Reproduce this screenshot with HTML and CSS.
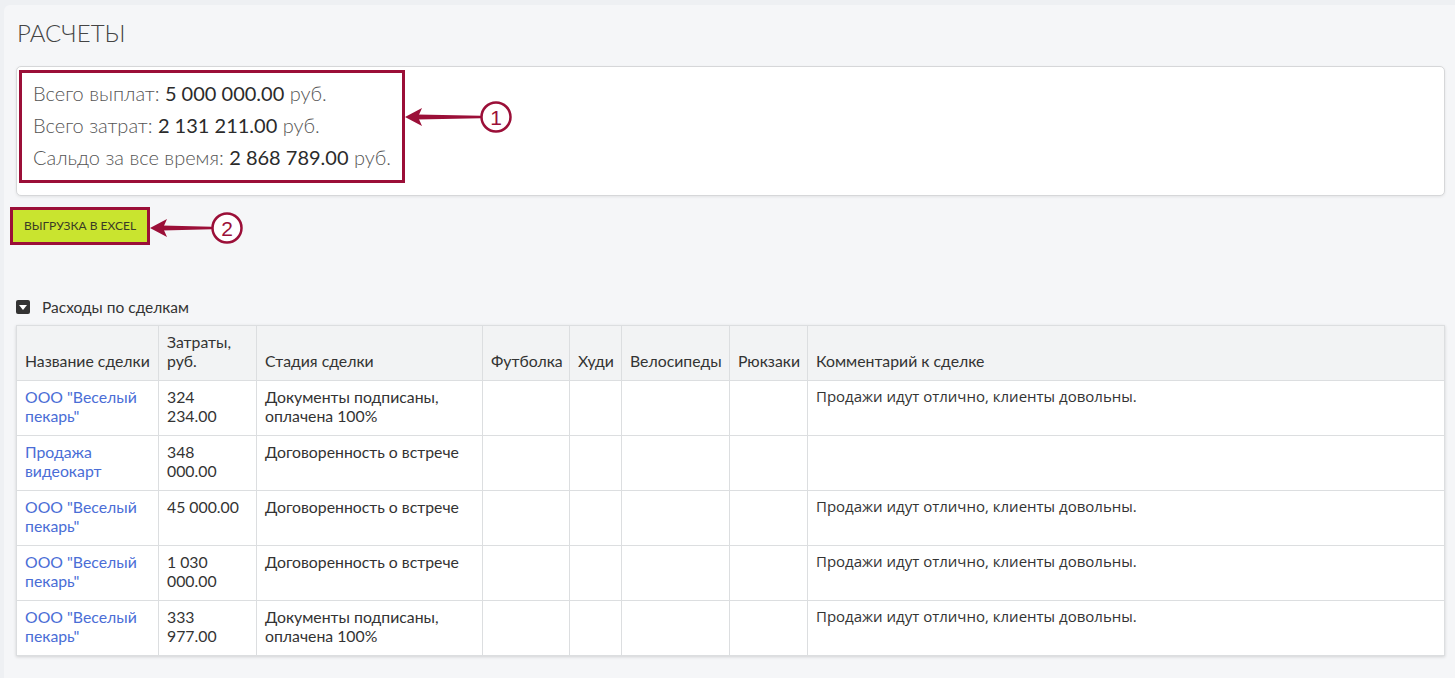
FILE: index.html
```html
<!DOCTYPE html>
<html lang="ru">
<head>
    <meta charset="UTF-8">
    <meta name="viewport" content="width=device-width, initial-scale=1.0">
    <title>Расчеты</title>
    <link rel="stylesheet" href="styles.css">
</head>
<body>
    <div class="page">
        <h1 class="page-title">РАСЧЕТЫ</h1>

        <div class="summary-card">
            <div class="summary-box mark">
                <div class="summary-line">Всего выплат: <b>5 000 000.00</b> руб.</div>
                <div class="summary-line">Всего затрат: <b>2 131 211.00</b> руб.</div>
                <div class="summary-line">Сальдо за все время: <b>2 868 789.00</b> руб.</div>
                <!-- выноска 1 -->
                <svg class="callout" width="116" height="36" viewBox="0 0 116 36">
                    <polygon points="3,18 20,9 16,18 20,27" fill="#9b0f38"/>
                    <polygon points="15,15.5 79,16.8 79,19.2 15,20.5" fill="#9b0f38"/>
                    <circle cx="94" cy="18" r="14.5" fill="#fff" stroke="#9b0f38" stroke-width="2.5"/>
                    <text x="94" y="25.5" text-anchor="middle" class="callout-num">1</text>
                </svg>
            </div>
        </div>

        <button class="excel-button mark">Выгрузка в Excel
            <!-- выноска 2 -->
            <svg class="callout" width="100" height="36" viewBox="0 0 100 36">
                <polygon points="3,18 20,9 16,18 20,27" fill="#9b0f38"/>
                <polygon points="15,15.5 65,16.8 65,19.2 15,20.5" fill="#9b0f38"/>
                <circle cx="80" cy="18" r="14.5" fill="#fff" stroke="#9b0f38" stroke-width="2.5"/>
                <text x="80" y="25.5" text-anchor="middle" class="callout-num">2</text>
            </svg>
        </button>

        <div class="section-toggle">
            <span class="toggle-icon"></span>
            <span>Расходы по сделкам</span>
        </div>

        <table class="deals">
            <colgroup>
                <col class="c-name">
                <col class="c-cost">
                <col class="c-stage">
                <col class="c-shirt">
                <col class="c-hoodie">
                <col class="c-bike">
                <col class="c-bag">
                <col>
            </colgroup>
            <thead>
                <tr>
                    <th>Название сделки</th>
                    <th>Затраты, руб.</th>
                    <th>Стадия сделки</th>
                    <th>Футболка</th>
                    <th>Худи</th>
                    <th>Велосипеды</th>
                    <th>Рюкзаки</th>
                    <th>Комментарий к сделке</th>
                </tr>
            </thead>
            <tbody>
                <tr>
                    <td><a href="#">ООО "Веселый пекарь"</a></td>
                    <td class="cost">324 234.00</td>
                    <td>Документы подписаны, оплачена 100%</td>
                    <td></td><td></td><td></td><td></td>
                    <td class="comment">Продажи идут отлично, клиенты довольны.</td>
                </tr>
                <tr>
                    <td><a href="#">Продажа видеокарт</a></td>
                    <td class="cost">348 000.00</td>
                    <td>Договоренность о встрече</td>
                    <td></td><td></td><td></td><td></td>
                    <td class="comment"></td>
                </tr>
                <tr>
                    <td><a href="#">ООО "Веселый пекарь"</a></td>
                    <td class="cost">45 000.00</td>
                    <td>Договоренность о встрече</td>
                    <td></td><td></td><td></td><td></td>
                    <td class="comment">Продажи идут отлично, клиенты довольны.</td>
                </tr>
                <tr>
                    <td><a href="#">ООО "Веселый пекарь"</a></td>
                    <td class="cost">1 030 000.00</td>
                    <td>Договоренность о встрече</td>
                    <td></td><td></td><td></td><td></td>
                    <td class="comment">Продажи идут отлично, клиенты довольны.</td>
                </tr>
                <tr>
                    <td><a href="#">ООО "Веселый пекарь"</a></td>
                    <td class="cost">333 977.00</td>
                    <td>Документы подписаны, оплачена 100%</td>
                    <td></td><td></td><td></td><td></td>
                    <td class="comment">Продажи идут отлично, клиенты довольны.</td>
                </tr>
            </tbody>
        </table>
    </div>
</body>
</html>
```

FILE: styles.css
```css
body {
    margin: 0;
    background-color: #eef0f3;
    font-family: Lato, "Noto Sans", sans-serif;
    color: #333;
}

.page {
    margin: 5px 0 0 4px;
    padding: 14px 10px 22px 12px;
    background-color: #f5f6f8;
    border-radius: 6px 0 0 0;
    min-height: 640px;
}

.page-title {
    margin: 0 0 18px 1px;
    font-size: 24px;
    font-weight: 300;
    line-height: 1.2;
    color: #444;
}

/* карточка с итогами */
.summary-card {
    background-color: #fff;
    border: 1px solid #d6d7d9;
    border-radius: 5px;
    box-shadow: 0 1px 3px rgba(0, 0, 0, 0.08);
    padding: 3px 0 12px 2px;
}

.mark {
    border: 3px solid #9b0f38;
    position: relative;
}

.summary-box {
    box-sizing: border-box;
    width: 386px;
    padding: 4px 0 7px 11px;
}

.summary-line {
    font-size: 20px;
    font-weight: 300;
    line-height: 32px;
    color: #555;
}

.summary-line b {
    font-size: 20px;
    font-weight: 400;
    color: #2b2b2b;
}

.callout {
    position: absolute;
    left: 100%;
    top: 26px;
}

.excel-button .callout {
    top: 0;
}

.callout-num {
    font-family: "Liberation Sans", Arial, sans-serif;
    font-size: 21px;
    fill: #9b0f38;
}

.excel-button {
    display: block;
    box-sizing: border-box;
    margin: 11px 0 0 -6px;
    height: 38px;
    padding: 0 11px;
    background-color: #c9e42f;
    font-family: Lato, sans-serif;
    font-size: 12px;
    text-transform: uppercase;
    color: #3a3b25;
    cursor: pointer;
}

.section-toggle {
    display: flex;
    align-items: center;
    gap: 12px;
    margin-top: 52px;
    font-size: 15.5px;
    line-height: 20px;
    color: #333;
}

.toggle-icon {
    width: 14px;
    height: 14px;
    border-radius: 2px;
    background-color: #333;
    position: relative;
}

.toggle-icon::after {
    content: "";
    position: absolute;
    left: 3px;
    top: 5px;
    border-left: 4px solid transparent;
    border-right: 4px solid transparent;
    border-top: 5px solid #fff;
}

/* таблица расходов */
.deals {
    width: 100%;
    margin-top: 8px;
    border-collapse: collapse;
    table-layout: fixed;
    background-color: #fff;
    box-shadow: 0 1px 3px rgba(0, 0, 0, 0.15);
    font-size: 15.8px;
    line-height: 19px;
}

.c-name { width: 142px; }
.c-cost { width: 98px; }
.c-stage { width: 226px; }
.c-shirt { width: 87px; }
.c-hoodie { width: 52px; }
.c-bike { width: 108px; }
.c-bag { width: 78px; }

.deals th,
.deals td {
    border: 1px solid #dcdee0;
    padding: 6px 8px 10px;
    text-align: left;
    vertical-align: top;
}

.deals th {
    background-color: #f2f3f4;
    font-weight: 400;
    vertical-align: bottom;
    color: #333;
}

.deals td.cost {
    padding-right: 11px;
}

.deals a {
    color: #4a6dd6;
    text-decoration: none;
}

.deals .comment {
    font-family: "Open Sans", sans-serif;
    font-size: 15px;
}
```
